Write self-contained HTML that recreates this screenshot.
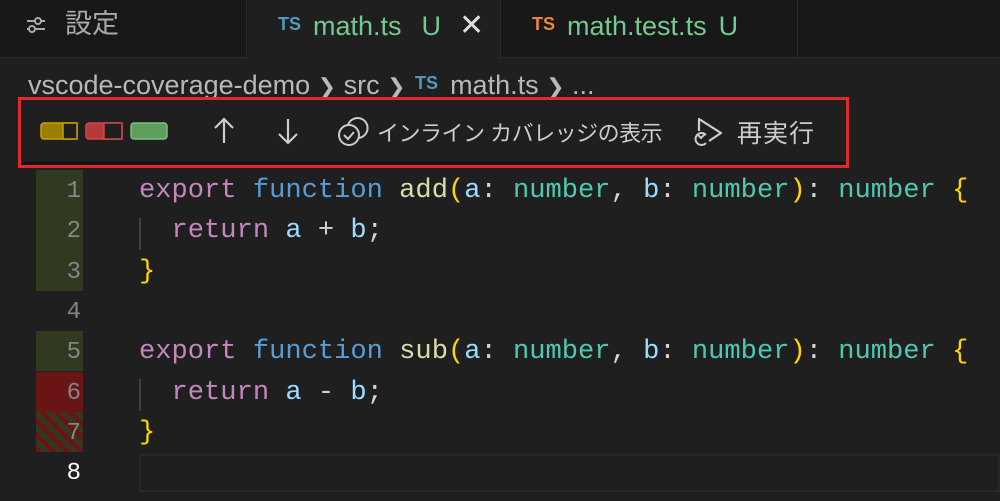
<!DOCTYPE html>
<html><head><meta charset="utf-8"><style>
*{margin:0;padding:0;box-sizing:border-box}
body{width:1000px;height:501px;background:#1f1f1f;overflow:hidden;position:relative;font-family:"Liberation Sans","Noto Sans CJK JP",sans-serif}
.tabs{position:absolute;left:0;top:0;width:1000px;height:58px;background:#181818;border-bottom:1px solid #2b2b2b}
.tab{position:absolute;top:0;height:58px;font-size:27px;line-height:48px}
.ts{font-size:18px;font-weight:bold;vertical-align:5px;margin-right:12px}
.g{color:#73c991}
.crumb{position:absolute;left:28px;top:66px;font-size:27px;color:#b8b8b8;line-height:34px;white-space:nowrap}
.tb{position:absolute;left:18px;top:97px;width:831px;height:71px;border:3px solid #e0282f;background:#1f1f1f}
.tb .sh{position:absolute;left:0;right:0;top:62px;height:3px;background:#111}
.code{position:absolute;left:0;top:170px;font-family:"Liberation Mono","DejaVu Sans Mono",monospace;font-size:27.1px}
.ln{position:absolute;left:36px;width:47px;height:40.3px;text-align:right;padding-right:2px;padding-top:2px;color:#858585;font-size:24px;line-height:40.3px}
.cl{position:absolute;left:139px;white-space:pre;line-height:40.3px;color:#d4d4d4}
.k{color:#c586c0}.f{color:#569cd6}.fn{color:#dcdcaa}.v{color:#9cdcfe}.t{color:#4ec9b0}.b{color:#ffd700}
</style></head><body>
<div class="tabs">
 <div class="tab" style="left:0;width:247px;border-right:1px solid #2b2b2b;color:#aaa;padding-left:65px">設定
  <svg width="20" height="18" style="position:absolute;left:26px;top:16px"><path d="M1 5h18M1 13h18" stroke="#aaa" stroke-width="2"/><circle cx="12" cy="5" r="3" fill="#181818" stroke="#aaa" stroke-width="2"/><circle cx="6" cy="13" r="3" fill="#181818" stroke="#aaa" stroke-width="2"/></svg></div>
 <div class="tab" style="left:248px;width:253px;background:#1f1f1f;height:59px;border-right:1px solid #2b2b2b;padding-left:30px"><span class="ts" style="color:#519aba">TS</span><span class="g">math.ts</span><span class="g" style="margin-left:20px">U</span><span style="color:#ddd;margin-left:18px;font-size:30px">✕</span></div>
 <div class="tab" style="left:502px;width:296px;border-right:1px solid #2b2b2b;padding-left:30px"><span class="ts" style="color:#e8883a">TS</span><span class="g">math.test.ts</span><span class="g" style="margin-left:12px">U</span></div>
</div>
<div class="crumb">vscode-coverage-demo <span style="font-size:22px">❯</span> src <span style="font-size:22px">❯</span> <span class="ts" style="color:#519aba;font-size:18px;margin-left:2px">TS</span>math.ts <span style="font-size:22px">❯</span> ...</div>
<div class="tb"><div class="sh"></div>
 <svg width="831" height="62" style="position:absolute;left:-3px;top:-3px">
  <rect x="23" y="26" width="36" height="16" rx="3" fill="#9b7d00" stroke="#c9a300" stroke-width="1.5"/><rect x="45" y="26" width="14" height="16" fill="#1f1f1f" stroke="#c9a300" stroke-width="1.5"/>
  <rect x="68" y="26" width="36" height="16" rx="3" fill="#b53a3a" stroke="#d14a4a" stroke-width="1.5"/><rect x="86" y="26" width="18" height="16" fill="#1f1f1f" stroke="#d14a4a" stroke-width="1.5"/>
  <rect x="113" y="26" width="36" height="16" rx="3" fill="#5f9e5f" stroke="#7cc27c" stroke-width="1.5"/>
  <path d="M206 22v24M197 31l9-9 9 9" stroke="#ccc" stroke-width="2.2" fill="none"/>
  <path d="M270 22v24M261 37l9 9 9-9" stroke="#ccc" stroke-width="2.2" fill="none"/>
  <circle cx="331" cy="38" r="10" stroke="#ccc" stroke-width="2" fill="none"/><path d="M330 28a10 10 0 1 1 10 13" stroke="#ccc" stroke-width="2" fill="none"/><path d="M326 38l4 4 6-7" stroke="#ccc" stroke-width="2" fill="none"/>
  <path d="M681 34v-12l22 14-12 8" stroke="#ccc" stroke-width="2.2" fill="none" stroke-linejoin="round"/><path d="M688 38a6 6 0 1 0 0 8" stroke="#ccc" stroke-width="2" fill="none"/><path d="M679 37l4 4 4-4" stroke="#ccc" stroke-width="2" fill="none"/>
 </svg>
 <div style="position:absolute;left:356px;top:16px;font-size:22px;color:#ccc;letter-spacing:-0.5px">インライン カバレッジの表示</div>
 <div style="position:absolute;left:716px;top:14px;font-size:25px;color:#ccc;letter-spacing:1px">再実行</div>
</div>
<div class="code">
 <div class="ln" style="top:0;background:#2f3a21">1</div>
 <div class="ln" style="top:40.3px;background:#2f3a21">2</div>
 <div class="ln" style="top:80.6px;background:#2f3a21">3</div>
 <div class="ln" style="top:120.9px">4</div>
 <div class="ln" style="top:161.2px;background:#2f3a21">5</div>
 <div class="ln" style="top:201.5px;background:#6a1515">6</div>
 <div class="ln" style="top:241.8px;background:repeating-linear-gradient(45deg,#6a1515 0 5px,#2f3a21 5px 10px)">7</div>
 <div class="ln" style="top:282.1px;color:#fff">8</div>
 <div style="position:absolute;left:139px;top:48px;width:2px;height:32px;background:#404040"></div>
 <div style="position:absolute;left:139px;top:209px;width:2px;height:32px;background:#404040"></div>
 <div style="position:absolute;left:139px;top:284px;width:861px;height:38px;border:2px solid #282828"></div>
 <div class="cl" style="top:1px"><span class="k">export</span> <span class="f">function</span> <span class="fn">add</span><span class="b">(</span><span class="v">a</span>: <span class="t">number</span>, <span class="v">b</span>: <span class="t">number</span><span class="b">)</span>: <span class="t">number</span> <span class="b">{</span></div>
 <div class="cl" style="top:41.3px">  <span class="k">return</span> <span class="v">a</span> + <span class="v">b</span>;</div>
 <div class="cl" style="top:81.6px"><span class="b">}</span></div>
 <div class="cl" style="top:162.2px"><span class="k">export</span> <span class="f">function</span> <span class="fn">sub</span><span class="b">(</span><span class="v">a</span>: <span class="t">number</span>, <span class="v">b</span>: <span class="t">number</span><span class="b">)</span>: <span class="t">number</span> <span class="b">{</span></div>
 <div class="cl" style="top:202.5px">  <span class="k">return</span> <span class="v">a</span> - <span class="v">b</span>;</div>
 <div class="cl" style="top:242.8px"><span class="b">}</span></div>
</div>
</body></html>
